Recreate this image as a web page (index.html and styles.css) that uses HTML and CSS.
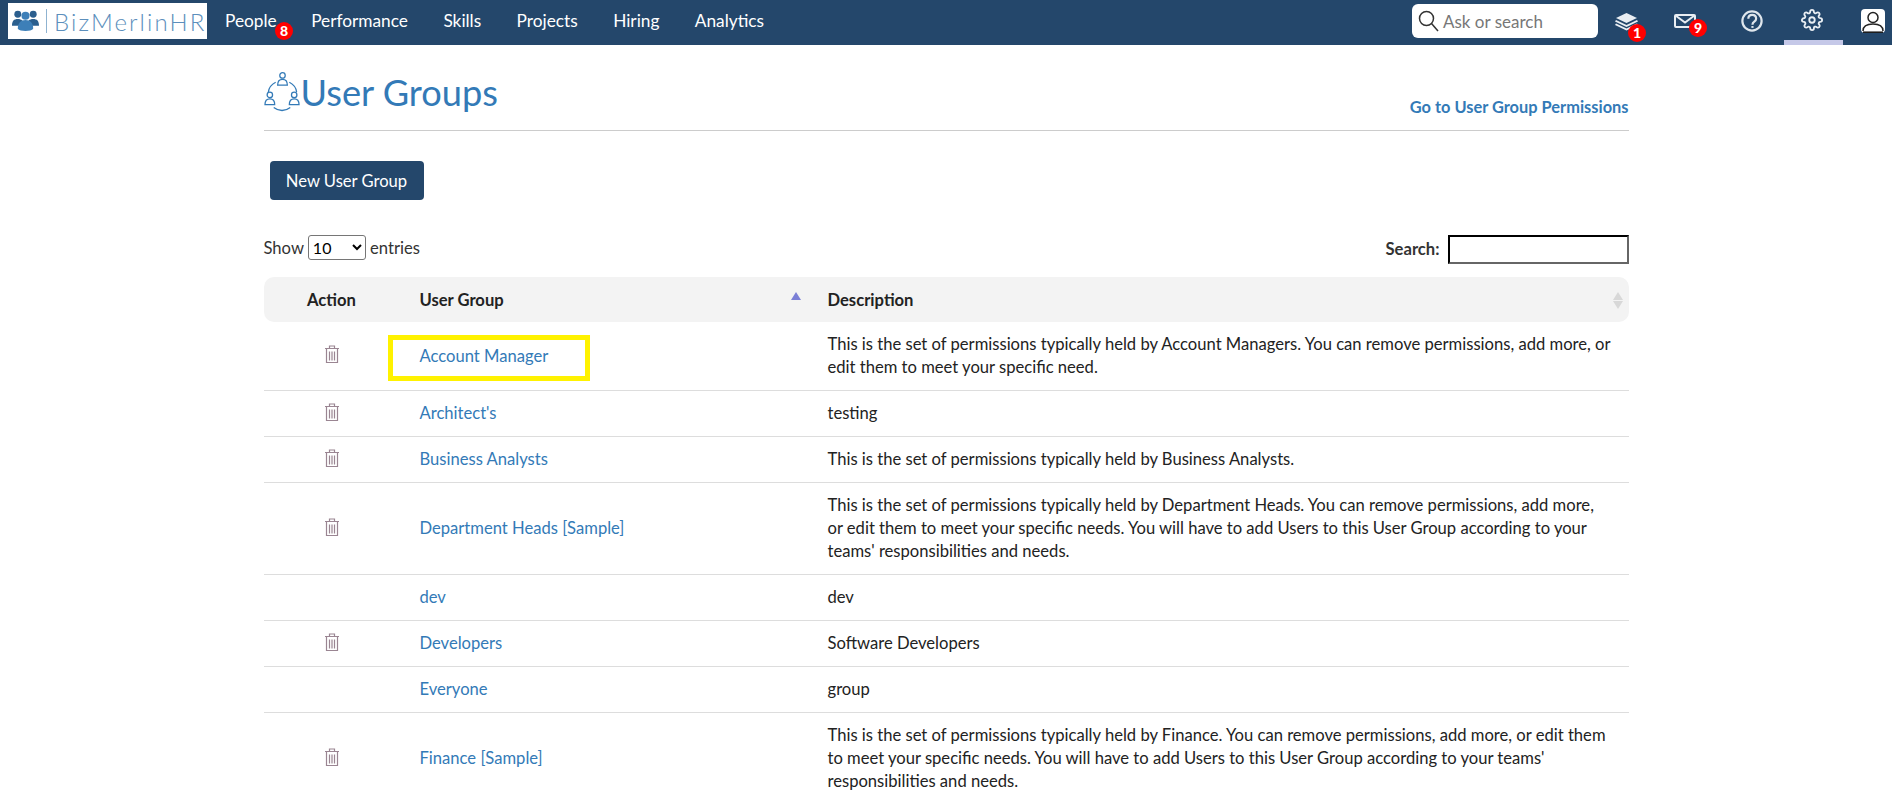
FILE: index.html
```html
<!DOCTYPE html>
<html>
  <head>
    <title>User Groups</title>
    <link rel="stylesheet" href="styles.css">
  </head>

  <body>
    <div class="navbar">
      <div class="logo">
        <svg class="logoIcon" width="27" height="24" viewBox="0 0 28 24">
          <circle cx="6" cy="5" r="3.6" fill="#2b5f8e"/>
          <circle cx="22" cy="5" r="3.6" fill="#2b5f8e"/>
          <path d="M0 17c0-5 2-7 6-7s6 2 6 7zM16 17c0-5 2-7 6-7s6 2 6 7z" fill="#2b5f8e"/>
          <circle cx="14" cy="6.5" r="4.2" fill="#3d7fb8"/>
          <path d="M6 20c0-6 3-9 8-9s8 3 8 9c-2 3-14 3-16 0z" fill="#3d7fb8"/>
        </svg>
        <span class="logoBar"></span>
        <span class="logoText">BizMerlinHR</span>
      </div>
      <div class="menu">
        <a class="menuItem menuPeople">People<span class="badge badgePeople">8</span></a>
        <a class="menuItem">Performance</a>
        <a class="menuItem">Skills</a>
        <a class="menuItem">Projects</a>
        <a class="menuItem">Hiring</a>
        <a class="menuItem">Analytics</a>
      </div>
      <div class="navRight">
        <div class="askBox">
          <svg width="21" height="22" viewBox="0 0 21 22" fill="none" stroke="#333" stroke-width="1.5">
            <circle cx="8.500" cy="8.500" r="7"/>
            <path d="M13.500 13.500l6.500 7.500"/>
          </svg>
          <span class="askText">Ask or search</span>
        </div>
        <div class="navIcon navStack">
          <svg width="23" height="18" viewBox="0 0 23 18" fill="#e9eef3">
            <path d="M11.500 0l10.500 5-10.500 5-10.500-5z"/>
            <path d="M1 7l10.500 5 10.500-5 1 1.500-11.500 5.500-11.500-5.500z"/>
            <path d="M1 10.500l10.500 5 10.500-5 1 1.500-11.500 5.500-11.500-5.500z"/>
          </svg>
          <span class="badge badgeStack">1</span>
        </div>
        <div class="navIcon navMail">
          <svg width="22" height="14" viewBox="0 0 22 14" fill="none" stroke="#e9eef3" stroke-width="2">
            <rect x="1" y="1" width="20" height="12" rx="1"/>
            <path d="M1.500 1.500l9.500 7 9.500-7"/>
          </svg>
          <span class="badge badgeMail">9</span>
        </div>
        <div class="navIcon navHelp">
          <svg width="22" height="22" viewBox="0 0 24 24" fill="none" stroke="#dfe6ec" stroke-width="2.400">
            <circle cx="12" cy="12" r="10.500"/>
            <path d="M8 9.500c0-5.500 8.500-5.500 8.500 0 0 3.500-4 3-4 6.500"/>
            <path d="M12.500 17.500v2"/>
          </svg>
        </div>
        <div class="navIcon navGear">
          <svg width="22" height="22" viewBox="0 0 24 24" fill="none" stroke="#e9eef3" stroke-width="2" stroke-linecap="round" stroke-linejoin="round">
            <circle cx="12" cy="12" r="3"/>
            <path d="M19.400 15a1.650 1.650 0 0 0 .33 1.820l.06.06a2 2 0 0 1 0 2.830 2 2 0 0 1-2.830 0l-.06-.06a1.650 1.650 0 0 0-1.820-.33 1.650 1.650 0 0 0-1 1.510V21a2 2 0 0 1-2 2 2 2 0 0 1-2-2v-.09A1.650 1.650 0 0 0 9 19.400a1.650 1.650 0 0 0-1.820.33l-.06.06a2 2 0 0 1-2.830 0 2 2 0 0 1 0-2.830l.06-.06a1.650 1.650 0 0 0 .33-1.820 1.650 1.650 0 0 0-1.510-1H3a2 2 0 0 1-2-2 2 2 0 0 1 2-2h.09A1.650 1.650 0 0 0 4.600 9a1.650 1.650 0 0 0-.33-1.820l-.06-.06a2 2 0 0 1 0-2.830 2 2 0 0 1 2.830 0l.06.06a1.650 1.650 0 0 0 1.820.33H9a1.650 1.650 0 0 0 1-1.510V3a2 2 0 0 1 2-2 2 2 0 0 1 2 2v.09a1.650 1.650 0 0 0 1 1.510 1.650 1.650 0 0 0 1.820-.33l.06-.06a2 2 0 0 1 2.830 0 2 2 0 0 1 0 2.830l-.06.06a1.650 1.650 0 0 0-.33 1.820V9a1.650 1.650 0 0 0 1.510 1H21a2 2 0 0 1 2 2 2 2 0 0 1-2 2h-.09a1.650 1.650 0 0 0-1.510 1z"/>
          </svg>
        </div>
        <div class="navIcon navUser">
          <svg width="24" height="24" viewBox="0 0 24 24">
            <rect width="24" height="24" rx="4" fill="#fff"/>
            <circle cx="12" cy="8.500" r="5" fill="none" stroke="#222" stroke-width="1.500"/>
            <path d="M2 22c0-5 4-7 10-7s10 2 10 7" fill="none" stroke="#222" stroke-width="1.500"/>
            <path d="M2 23.200h20" stroke="#111" stroke-width="1.500"/>
          </svg>
        </div>
      </div>
    </div>

    <div class="page">
      <div class="titleRow">
        <h1 class="pageTitle">
          <svg width="37" height="44" viewBox="0 0 38 44" fill="none" stroke="#337ab7" stroke-width="1.300">
            <circle cx="19" cy="5" r="2.800"/>
            <path d="M14 15c0-4 2-6 5-6s5 2 5 6z"/>
            <circle cx="6" cy="25" r="2.800"/>
            <path d="M1 35c0-4 2-6 5-6s5 2 5 6z"/>
            <circle cx="31" cy="25" r="2.800"/>
            <path d="M26 35c0-4 2-6 5-6s5 2 5 6z"/>
            <path d="M12 12c-4 2-7 6-7.500 10M26 12c4 2 7 6 7.500 10M10 38c5 4 12 4 17 0"/>
          </svg>
          <span>User Groups</span>
        </h1>
        <a class="permLink">Go to User Group Permissions</a>
      </div>

      <button class="newButton">New User Group</button>

      <div class="tableTools">
        <label class="showEntries">Show
          <select class="entriesSelect"><option>10</option></select>
          entries</label>
        <label class="searchLabel">Search: <input class="searchInput" type="text"></label>
      </div>

      <table class="groupTable">
        <colgroup>
          <col class="colAction">
          <col class="colGroup">
          <col>
        </colgroup>
        <thead>
          <tr>
            <th class="actionCell">Action</th>
            <th class="sortCell">User Group<span class="sortUp"></span></th>
            <th class="sortCell">Description<span class="sortBoth"><i></i><b></b></span></th>
          </tr>
        </thead>
        <tbody id="rows"></tbody>
      </table>
    </div>

    <script>
      const groups = [
        ["Account Manager", "This is the set of permissions typically held by Account Managers. You can remove permissions, add more, or edit them to meet your specific need.", true],
        ["Architect's", "testing", true],
        ["Business Analysts", "This is the set of permissions typically held by Business Analysts.", true],
        ["Department Heads [Sample]", "This is the set of permissions typically held by Department Heads. You can remove permissions, add more, or edit them to meet your specific needs. You will have to add Users to this User Group according to your teams' responsibilities and needs.", true],
        ["dev", "dev", false],
        ["Developers", "Software Developers", true],
        ["Everyone", "group", false],
        ["Finance [Sample]", "This is the set of permissions typically held by Finance. You can remove permissions, add more, or edit them to meet your specific needs. You will have to add Users to this User Group according to your teams' responsibilities and needs.", true],
      ];

      const trash = '<svg class="trash" width="14" height="18" viewBox="0 0 14 18" fill="none" stroke="#9a8592" stroke-width="1.200">'
        + '<path d="M0 3.500h14M4.500 3V1h5v2M1.500 4v13.500h11V4M4.500 6.500v9M7 6.500v9M9.500 6.500v9"/></svg>';

      const tbody = document.getElementById("rows");
      groups.forEach((group, i) => {
        const row = document.createElement("tr");
        const marker = i === 0 ? '<span class="highlight"></span>' : "";
        row.innerHTML = '<td class="actionCell">' + (group[2] ? trash : "") + "</td>"
          + '<td class="groupCell">' + marker + "<a>" + group[0] + "</a></td>"
          + '<td class="descCell">' + group[1] + "</td>";
        tbody.appendChild(row);
      });
    </script>
  </body>
</html>
```

FILE: styles.css
```css
html, body {
  margin: 0;
  height: 800px;
  overflow: hidden;
}

body {
  font-family: Lato, "Open Sans", sans-serif;
  font-size: 16.6px;
  line-height: 23px;
  color: #333;
  background-color: #fff;
}

.navbar {
  display: flex;
  align-items: center;
  height: 45px;
  box-sizing: border-box;
  padding-left: 8px;
  background-color: #24476b;
}

.logo {
  display: flex;
  align-items: center;
  width: 199px;
  height: 36px;
  margin-bottom: 3px;
  background-color: #fff;
  color: #5c8fbc;
}

.logoIcon {
  margin-left: 4px;
}

.logoBar {
  width: 1px;
  height: 24px;
  margin: 0 7px;
  background-color: #8fb3d1;
}

.logoText {
  font-size: 24px;
  font-weight: 300;
  letter-spacing: 2.100px;
}

.menu {
  display: flex;
  gap: 35.400px;
  margin-left: 18px;
  margin-bottom: 5px;
  font-size: 17.300px;
}

.menuItem {
  position: relative;
  color: #fff;
}

.menuPeople {
  margin-right: -1px;
}

.badge {
  position: absolute;
  width: 18px;
  height: 18px;
  border-radius: 50%;
  background-color: #f00;
  color: #fff;
  font-size: 14px;
  font-weight: 900;
  line-height: 18px;
  text-align: center;
}

.badgePeople {
  left: 50px;
  top: 13px;
}

.navRight {
  display: flex;
  align-items: center;
  margin-left: auto;
  height: 100%;
}

.askBox {
  display: flex;
  align-items: center;
  width: 186px;
  height: 34px;
  box-sizing: border-box;
  padding-left: 6px;
  margin-bottom: 3px;
  background-color: #fff;
  border-radius: 6px;
}

.askText {
  margin-left: 4px;
  font-size: 17px;
  color: #777;
}

.navIcon {
  position: relative;
  display: flex;
  align-items: center;
  justify-content: center;
  height: 100%;
  box-sizing: border-box;
  padding-bottom: 5px;
}

.navStack { width: 56px; padding-bottom: 2px; }
.navMail { width: 62px; padding-bottom: 3px; }
.navHelp { width: 68px; padding-left: 4px; padding-bottom: 3px; }

.navGear {
  width: 59px;
  border-bottom: 5px solid #c5c8e8;
  padding-bottom: 0;
  padding-right: 3px;
}

.navUser {
  width: 49px;
  padding-left: 11px;
  padding-bottom: 4px;
}

.badgeStack {
  left: 30px;
  top: 24px;
}

.badgeMail {
  left: 35px;
  top: 19px;
}

.page {
  width: 1365px;
  margin: 0 auto;
}

.titleRow {
  display: flex;
  justify-content: space-between;
  align-items: flex-end;
  height: 85px;
  border-bottom: 1px solid #ccc;
}

.pageTitle {
  display: flex;
  align-items: center;
  margin: 0 0 16px 0;
  font-size: 36.200px;
  font-weight: 400;
  line-height: 44px;
  color: #337ab7;
}

.permLink {
  margin-bottom: 12px;
  font-size: 16.400px;
  font-weight: 700;
  color: #337ab7;
}

.newButton {
  display: block;
  width: 154px;
  height: 39px;
  margin: 30px 0 0 6px;
  padding: 0;
  border: 0;
  border-radius: 4px;
  background-color: #24476b;
  color: #fff;
  font-family: inherit;
  font-size: 16.600px;
}

.tableTools {
  display: flex;
  justify-content: space-between;
  align-items: center;
  height: 30px;
  margin-top: 34px;
}

.showEntries {
  margin-bottom: 3px;
}

.entriesSelect {
  width: 58px;
  height: 25px;
  font-family: inherit;
  font-size: 16px;
  background-color: #fff;
  border: 1px solid #767676;
  border-radius: 3px;
}

.searchLabel {
  font-weight: 700;
  display: flex;
  align-items: center;
  gap: 8px;
}

.searchInput {
  width: 181px;
  height: 29px;
  margin-top: 1px;
  box-sizing: border-box;
  border: 2px inset #767676;
  border-color: #222 #666 #666 #222;
  padding: 1px 2px;
}

.groupTable {
  width: 100%;
  margin-top: 13px;
  border-collapse: separate;
  border-spacing: 0;
  table-layout: fixed;
}

.colAction {
  width: 136px;
}

.colGroup {
  width: 408px;
}

.groupTable th {
  position: relative;
  height: 45px;
  padding: 2px 20px 0 20px;
  box-sizing: border-box;
  background-color: #f3f3f3;
  color: #222;
  font-weight: 700;
  text-align: left;
}

.groupTable th:first-child {
  border-radius: 10px 0 0 10px;
}

.groupTable th:last-child {
  border-radius: 0 10px 10px 0;
}

.groupTable td {
  padding: 11px 20px;
  border-bottom: 1px solid #ddd;
  color: #222;
}

.groupTable .descCell {
  padding-right: 16.800px;
}

.groupTable .actionCell {
  text-align: center;
  vertical-align: middle;
}

.trash {
  display: block;
  margin: -4px auto 0 auto;
}

.groupCell {
  position: relative;
}

.groupCell a {
  color: #337ab7;
}

.highlight {
  position: absolute;
  left: -12px;
  top: 13px;
  width: 202px;
  height: 46px;
  box-sizing: border-box;
  border: 5px solid #fff200;
}

.sortUp {
  position: absolute;
  right: 7px;
  top: 15px;
  border-left: 5px solid transparent;
  border-right: 5px solid transparent;
  border-bottom: 8px solid #7b7fd6;
}

.sortBoth i, .sortBoth b {
  position: absolute;
  right: 6px;
  width: 0;
  height: 0;
  border-left: 5px solid transparent;
  border-right: 5px solid transparent;
}

.sortBoth i {
  top: 15px;
  border-bottom: 8px solid #d8d8d8;
}

.sortBoth b {
  top: 24px;
  border-top: 8px solid #d8d8d8;
}
```
